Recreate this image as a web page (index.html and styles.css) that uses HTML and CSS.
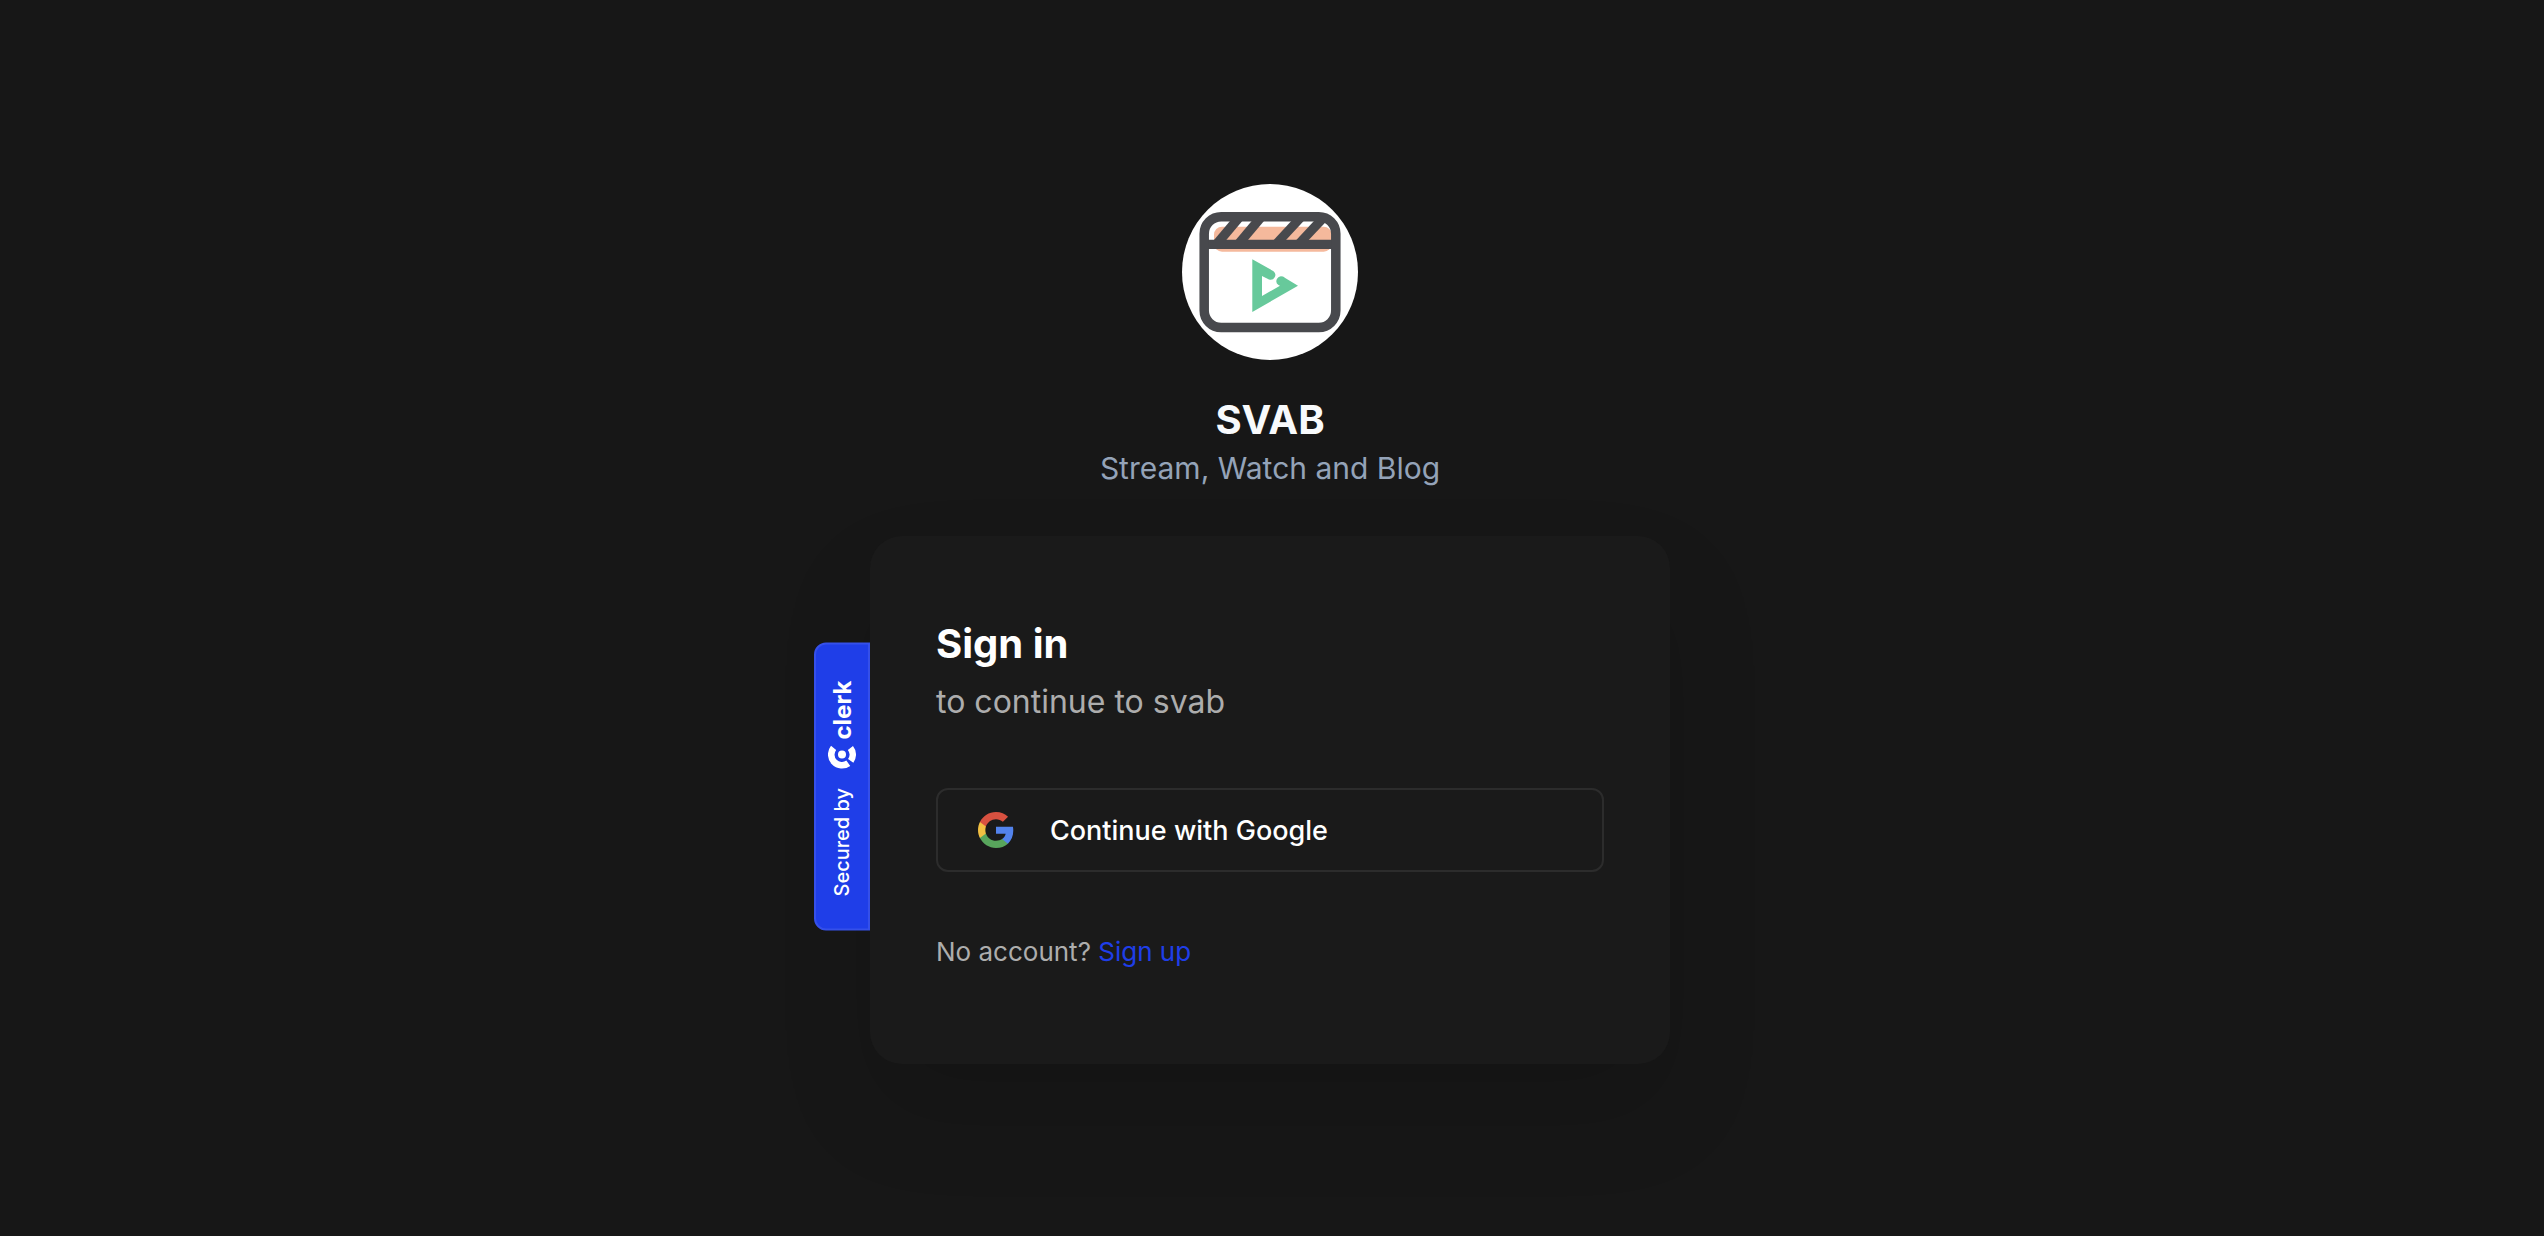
FILE: index.html
```html
<!DOCTYPE html>
<html lang="en">
<head>
  <meta charset="UTF-8">
  <meta name="viewport" content="width=device-width, initial-scale=1">
  <title>SVAB</title>
  <link rel="stylesheet" href="styles.css">
</head>
<body>

<main class="page">
  <header class="brand">
    <svg class="brand-logo" viewBox="0 0 176 176" role="img" aria-label="SVAB logo">
      <circle cx="88" cy="88" r="88" fill="#fff"/>
      <rect x="32" y="42.7" width="117.7" height="25" rx="8" fill="#f5b99c"/>
      <g fill="#48494d">
        <path d="M48 37H60.3L44.3 56H32Z"/>
        <path d="M69.7 37H82L66 56H53.7Z"/>
        <path d="M109.3 37H121.7L104 56H91.7Z"/>
        <path d="M132 37H144.7L126.7 56H114.3Z"/>
        <path d="M22 55.7H154V65H22Z"/>
      </g>
      <rect x="22.2" y="32.7" width="131.6" height="110.8" rx="17" fill="none" stroke="#48494d" stroke-width="9.5"/>
      <path d="M70.3 75.3L91.5 87.2A4.8 4.8 0 0 1 87 95.5L80 92V112L98 101.7L96.5 101A4.8 4.8 0 0 1 101 92.6L104 94.5L116 101.7L70.3 128Z" fill="#67c99b"/>
    </svg>
    <h1 class="brand-name">SVAB</h1>
    <p class="brand-tagline">Stream, Watch and Blog</p>
  </header>

  <section class="card">
    <a class="badge" href="#">
      <span class="badge-text">Secured by</span>
      <svg class="badge-icon" viewBox="0 0 28 24" aria-hidden="true">
        <g transform="rotate(180 14 12)" fill="none" stroke="#fff" stroke-width="6.6">
          <circle cx="14" cy="9" r="4" fill="#fff" stroke="none"/>
          <path d="M5.6 2.4A10.7 10.7 0 0 0 20.3 17.7"/>
          <path d="M22.4 2.4A10.7 10.7 0 0 1 22.7 15.3"/>
        </g>
      </svg>
      <span class="badge-name">clerk</span>
    </a>

    <h2 class="card-title">Sign in</h2>
    <p class="card-subtitle">to continue to svab</p>

    <button class="google-button" type="button">
      <svg class="google-icon" viewBox="1 1 22 22" aria-hidden="true">
        <path fill="#5383ec" d="M22.56 12.25c0-.78-.07-1.53-.2-2.25H12v4.26h5.92c-.26 1.37-1.04 2.53-2.21 3.31v2.77h3.57c2.08-1.92 3.28-4.74 3.28-8.09z"/>
        <path fill="#58a55c" d="M12 23c2.97 0 5.46-.98 7.28-2.66l-3.57-2.77c-.98.66-2.23 1.06-3.71 1.06-2.86 0-5.29-1.93-6.16-4.53H2.18v2.84C3.99 20.53 7.7 23 12 23z"/>
        <path fill="#f1bf42" d="M5.84 14.09c-.22-.66-.35-1.36-.35-2.09s.13-1.43.35-2.09V7.07H2.18C1.43 8.55 1 10.22 1 12s.43 3.45 1.18 4.93l3.66-2.84z"/>
        <path fill="#d85140" d="M12 5.38c1.62 0 3.06.56 4.21 1.64l3.15-3.15C17.45 2.09 14.97 1 12 1 7.7 1 3.99 3.47 2.18 7.07l3.66 2.84c.87-2.6 3.3-4.53 6.16-4.53z"/>
      </svg>
      <span>Continue with Google</span>
    </button>

    <p class="card-footer">No account? <a href="#">Sign up</a></p>
  </section>
</main>

</body>
</html>
```
FILE: styles.css
```css
* {
  box-sizing: border-box;
}
body {
  margin: 0;
  min-height: 100vh;
  background: #171717;
  color: #fff;
  font-family: Inter, sans-serif;
}
h1, h2, p {
  margin: 0;
}
a {
  text-decoration: none;
}
.page {
  display: flex;
  flex-direction: column;
  align-items: center;
  gap: 44px;
  padding: 184px 4px 48px 0;
}

/* Brand */
.brand {
  display: flex;
  flex-direction: column;
  align-items: center;
  text-align: center;
}
.brand-logo {
  width: 176px;
  height: 176px;
  margin-bottom: 36px;
}
.brand-name {
  font-size: 40px;
  line-height: 48px;
  font-weight: 700;
  color: #f8fafc;
}
.brand-tagline {
  font-size: 30px;
  line-height: 48px;
  color: #94a3b8;
}

/* Sign in card */
.card {
  position: relative;
  width: 100%;
  max-width: 800px;
  padding: 80px 66px 90px;
  background: #1a1a1a;
  border-radius: 32px;
  box-shadow: 0 48px 96px rgba(0, 0, 0, 0.12);
}
.card-title {
  font-size: 40px;
  line-height: 56px;
  font-weight: 700;
}
.card-subtitle {
  font-size: 32px;
  line-height: 60px;
  color: #adadad;
}
.google-button {
  display: flex;
  align-items: center;
  gap: 36px;
  width: 100%;
  height: 84px;
  margin: 56px 0 58px;
  padding: 0 40px;
  background: transparent;
  border: 2px solid #2c2c2c;
  border-radius: 12px;
  color: #fff;
  font-family: inherit;
  font-size: 27px;
  font-weight: 500;
  cursor: pointer;
}
.google-button:hover {
  background: #202020;
}
.google-icon {
  width: 36px;
  height: 36px;
}
.card-footer {
  font-size: 26px;
  line-height: 44px;
  color: #adadad;
}
.card-footer a {
  color: #1f3ee8;
}

/* Badge on the left edge of the card */
.badge {
  position: absolute;
  top: 107px;
  right: 100%;
  display: flex;
  align-items: center;
  width: 56px;
  padding: 32px 0 36px;
  background: #1f3ee8;
  border: 2px solid #3550ea;
  border-radius: 0 12px 12px 0;
  color: #fff;
  writing-mode: vertical-rl;
  transform: rotate(180deg);
}
.badge-text {
  font-size: 20px;
  font-weight: 500;
}
.badge-icon {
  width: 28px;
  height: 24px;
  margin: 18px 0 6px;
}
.badge-name {
  font-size: 24px;
  font-weight: 700;
}
```
